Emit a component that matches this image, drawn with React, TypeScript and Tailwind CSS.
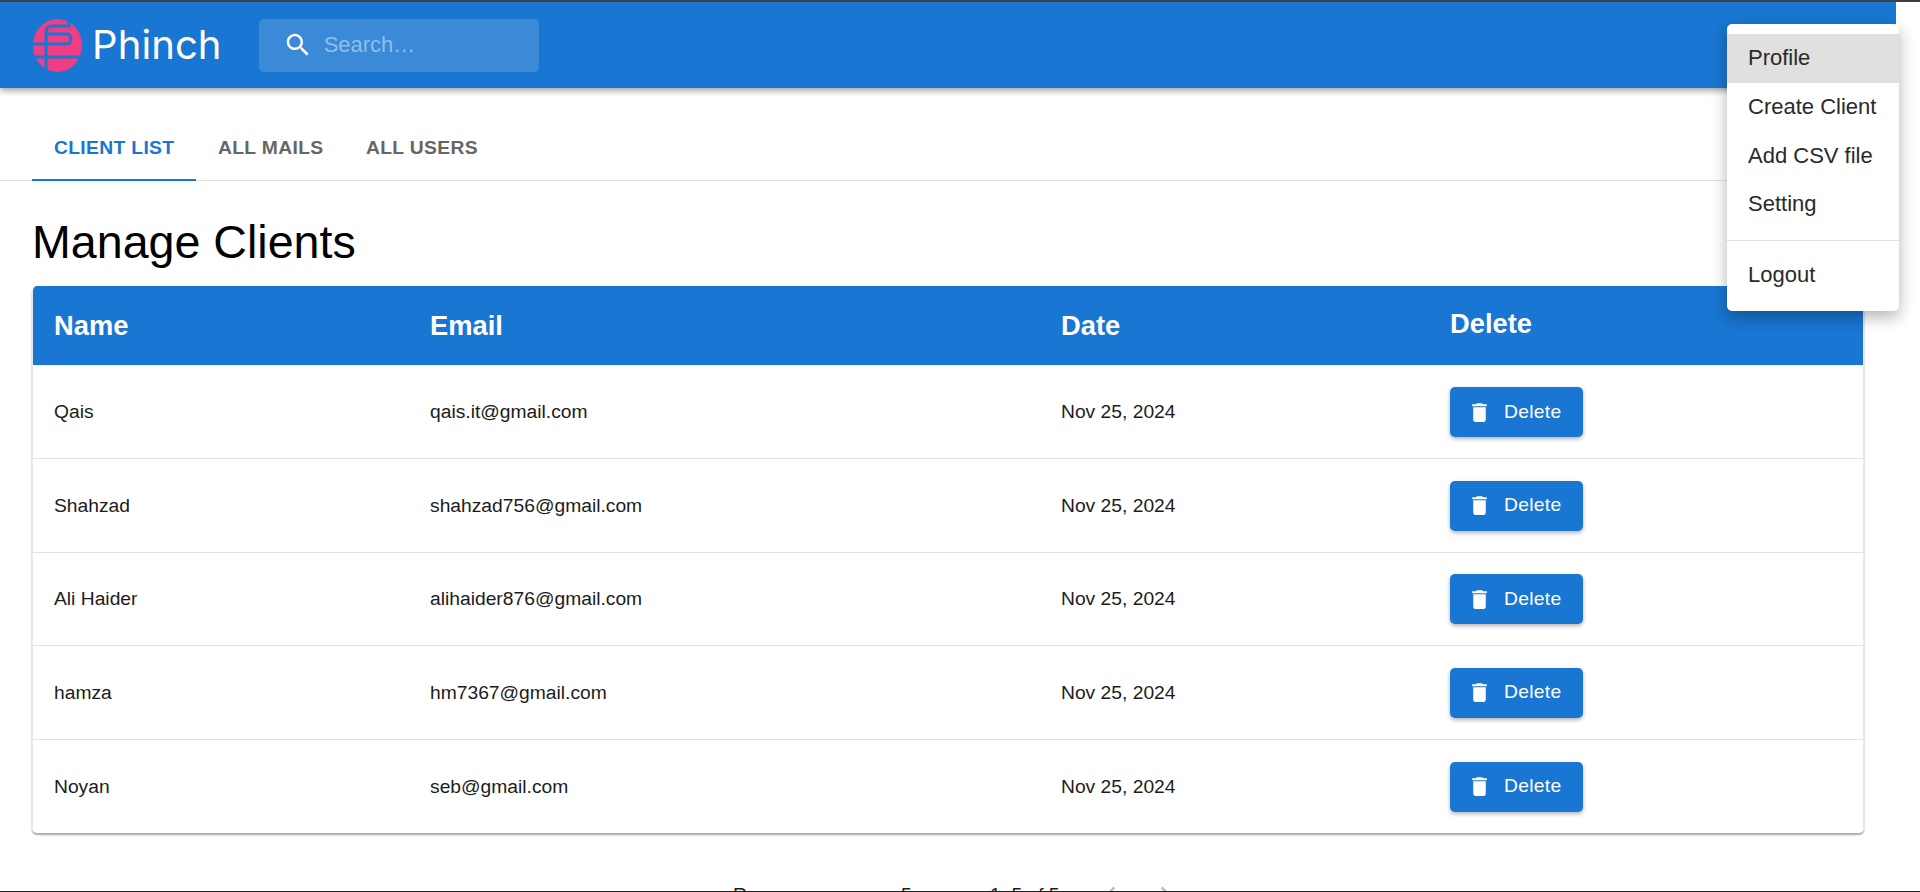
import React from 'react';

const font = { fontFamily: '"Liberation Sans", Arial, sans-serif' };

const clients = [
  { name: 'Qais', email: 'qais.it@gmail.com' },
  { name: 'Shahzad', email: 'shahzad756@gmail.com' },
  { name: 'Ali Haider', email: 'alihaider876@gmail.com' },
  { name: 'hamza', email: 'hm7367@gmail.com' },
  { name: 'Noyan', email: 'seb@gmail.com' },
];

const TrashIcon = () => (
  <svg viewBox="0 0 24 24" className="w-[25px] h-[25px] fill-white">
    <path d="M6 19c0 1.1.9 2 2 2h8c1.1 0 2-.9 2-2V7H6v12zM19 4h-3.5l-1-1h-5l-1 1H5v2h14V4z" />
  </svg>
);

const Logo = () => (
  <svg viewBox="0 0 49 53" className="w-[49px] h-[53px]">
    <ellipse cx="24.5" cy="26.5" rx="24.5" ry="26.5" fill="#ef3e83" />
    <path d="M36 0V7H20C14 7 13 10 13 15V53M13 15H34C39 15 39 25 34 25H0M0 38H49" fill="none" stroke="#1976d2" strokeWidth="3" />
  </svg>
);

const App = () => {
  return (
    <div className="h-screen relative overflow-hidden flex flex-col bg-white text-[#1c1c1c]" style={font}>
      <div className="h-[2px] bg-[#3c4043]" />
      <div className="flex-1 w-[1896px] overflow-hidden">
        {/* App bar */}
        <header className="h-[86px] bg-[#1976d2] flex items-center pl-[33px] shadow-[0_3px_6px_rgba(0,0,0,0.35)] relative">
          <Logo />
          <span className="ml-[10px] text-[40px] leading-none text-white tracking-[0.1px]" style={{ fontFamily: 'Inter, sans-serif', fontWeight: 400 }}>
            Phinch
          </span>
          <div className="ml-[37px] w-[280px] h-[53px] rounded-[5px] bg-white/15 flex items-center pl-[24px]">
            <svg viewBox="0 0 24 24" className="w-[30px] h-[30px] fill-white">
              <path d="M15.5 14h-.79l-.28-.27C15.41 12.59 16 11.11 16 9.5 16 5.91 13.09 3 9.5 3S3 5.91 3 9.5 5.91 16 9.5 16c1.61 0 3.09-.59 4.23-1.57l.27.28v.79l5 4.99L20.49 19l-4.99-5zm-6 0C7.01 14 5 11.99 5 9.5S7.01 5 9.5 5 14 7.01 14 9.5 11.99 14 9.5 14z" />
            </svg>
            <span className="ml-[11px] pb-[2px] text-[22px] text-white/45">Search…</span>
          </div>
        </header>

        {/* Tabs */}
        <nav className="h-[93px] border-b border-[#e0e0e0] flex items-end pl-[32px] text-[19.25px] font-bold tracking-[0.35px]">
          <div className="w-[164px] h-[60px] flex items-center pl-[22px] pb-[4px] text-[#1976d2] border-b-[2px] border-[#1976d2] -mb-px">CLIENT LIST</div>
          <div className="w-[148px] h-[60px] flex items-center pl-[22px] pb-[4px] text-[#666]">ALL MAILS</div>
          <div className="h-[60px] flex items-center pl-[22px] pb-[4px] text-[#666]">ALL USERS</div>
        </nav>

        <main className="pl-[32px] w-[1864px]">
          <h1 className="text-[46.6px] leading-[52px] text-black mt-[35px] mb-[18px]">Manage Clients</h1>

          <div className="rounded-[5px] overflow-hidden border-x border-[#e8e8e8] shadow-[0_2px_2px_rgba(0,0,0,0.35)]">
            <table className="w-full table-fixed border-collapse">
              <colgroup>
                <col className="w-[376px]" />
                <col className="w-[631px]" />
                <col className="w-[389px]" />
                <col />
              </colgroup>
              <thead>
                <tr className="h-[79px] bg-[#1976d2] text-white text-[27.3px] font-bold text-left">
                  <th className="pl-[21px] pt-[1px]">Name</th>
                  <th className="pl-[21px] pt-[1px]">Email</th>
                  <th className="pl-[21px] pt-[1px]">Date</th>
                  <th className="pl-[21px] pb-[3px]">Delete</th>
                </tr>
              </thead>
              <tbody>
                {clients.map((client, i) => (
                  <tr key={client.email} className={`h-[93.5px] text-[19.25px] ${i < clients.length - 1 ? 'border-b border-[#e0e0e0]' : ''}`}>
                    <td className="pl-[21px] pt-[2px]">{client.name}</td>
                    <td className="pl-[21px] pt-[2px]">{client.email}</td>
                    <td className="pl-[21px] pt-[2px]">Nov 25, 2024</td>
                    <td className="pl-[21px] pt-[1px]">
                      <button className="w-[133px] h-[50px] rounded-[5px] bg-[#1976d2] text-white text-[19.25px] flex items-center pl-[17px] gap-[12px] shadow-[0_2px_4px_rgba(0,0,0,0.3)]">
                        <TrashIcon />
                        <span className="tracking-[0.3px]">Delete</span>
                      </button>
                    </td>
                  </tr>
                ))}
              </tbody>
            </table>
          </div>

          {/* Pagination, cut off by the window */}
          <div className="relative h-[40px] mt-[52px] text-[19.25px] leading-[20px]">
            <span className="absolute left-[701px] top-0">Rows per page:</span>
            <span className="absolute left-[869px] top-0">5</span>
            <span className="absolute left-[958px] top-0">1–5 of 5</span>
            <svg viewBox="0 0 24 24" className="absolute left-[1064px] -top-[6px] w-[30px] h-[30px] fill-[#bdbdbd]">
              <path d="M15.41 7.41 14 6l-6 6 6 6 1.41-1.41L10.83 12z" />
            </svg>
            <svg viewBox="0 0 24 24" className="absolute left-[1118px] -top-[6px] w-[30px] h-[30px] fill-[#bdbdbd]">
              <path d="M10 6 8.59 7.41 13.17 12l-4.58 4.59L10 18l6-6z" />
            </svg>
          </div>
        </main>
      </div>
      <div className="h-px bg-[#222] relative" />

      {/* Account menu */}
      <div className="absolute left-[1727px] top-[24px] w-[172px] h-[287px] rounded-[5px] bg-white pt-[10px] text-[22px] text-[#2a2a2a] shadow-[0_6px_16px_rgba(0,0,0,0.3)]">
        <div className="h-[49px] flex items-center pl-[21px] pb-[2px] bg-[#e0e0e0]">Profile</div>
        <div className="h-[49px] flex items-center pl-[21px] pb-[2px]">Create Client</div>
        <div className="h-[49px] flex items-center pl-[21px] pb-[2px]">Add CSV file</div>
        <div className="h-[47px] flex items-center pl-[21px] pb-[2px]">Setting</div>
        <div className="h-px bg-[#e0e0e0] mt-[12px] mb-[10px]" />
        <div className="h-[48px] flex items-center pl-[21px] pb-[2px]">Logout</div>
      </div>
    </div>
  );
};

export default App;
